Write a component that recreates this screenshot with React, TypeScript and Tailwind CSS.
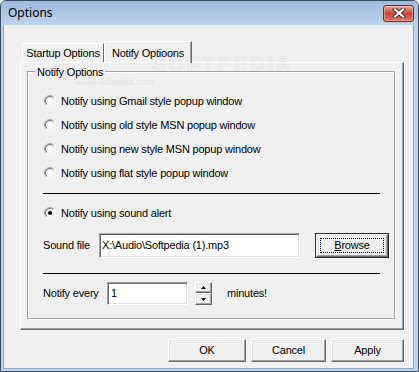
import type { ReactNode } from "react";

// Classic Win7-basic "Options" dialog

const raised =
  "border border-t-white border-l-white border-r-[#696969] border-b-[#696969] shadow-[inset_-1px_-1px_0_#a0a0a0,inset_1px_1px_0_#e3e3e3] bg-[#f0f0f0]";
const sunken =
  "border border-t-[#a0a0a0] border-l-[#a0a0a0] border-r-white border-b-white shadow-[inset_1px_1px_0_#696969,inset_-1px_-1px_0_#e3e3e3] bg-white";

function Radio({ checked }: { checked?: boolean }) {
  return (
    <svg width="12" height="12" viewBox="0 0 12 12" className="shrink-0">
      <circle cx="6" cy="6" r="5.5" fill="#fff" />
      <path d="M2.1 9.9 A5.5 5.5 0 0 1 9.9 2.1" stroke="#a0a0a0" strokeWidth="1" fill="none" />
      <path d="M2.8 9.2 A4.5 4.5 0 0 1 9.2 2.8" stroke="#696969" strokeWidth="1" fill="none" />
      <path d="M9.9 2.1 A5.5 5.5 0 0 1 2.1 9.9" stroke="#ffffff" strokeWidth="1" fill="none" />
      <path d="M9.2 2.8 A4.5 4.5 0 0 1 2.8 9.2" stroke="#e3e3e3" strokeWidth="1" fill="none" />
      {checked && <circle cx="6" cy="6" r="2" fill="#000" />}
    </svg>
  );
}

function RadioRow({ label, checked }: { label: string; checked?: boolean }) {
  return (
    <div className="h-[24px] flex items-center ml-[1px]">
      <Radio checked={checked} />
      <span className="ml-[5px]">{label}</span>
    </div>
  );
}

function Button({ children, className = "" }: { children: ReactNode; className?: string }) {
  return (
    <div className={`h-[23px] flex items-center justify-center ${raised} ${className}`}>
      {children}
    </div>
  );
}

function CloseButton() {
  return (
    <div className="w-[31px] h-[17px] rounded-[3px] border border-[#6b2a22] bg-gradient-to-b from-[#e9a899] via-[#c5483b] to-[#d9796a] flex items-center justify-center shadow-[inset_0_0_0_1px_rgba(255,255,255,0.35)]">
      <svg width="14" height="10" viewBox="0 0 14 10">
        <path d="M3 1.5 L11 8.5 M11 1.5 L3 8.5" stroke="#4a2420" strokeWidth="4" strokeLinecap="square" />
        <path d="M3 1.5 L11 8.5 M11 1.5 L3 8.5" stroke="#ffffff" strokeWidth="2.2" strokeLinecap="square" />
      </svg>
    </div>
  );
}

function Spinner() {
  return (
    <div className="w-[17px] h-[23px] flex flex-col">
      <div className={`h-[11px] flex items-center justify-center ${raised}`}>
        <svg width="5" height="3" viewBox="0 0 5 3">
          <path d="M2.5 0 L5 3 L0 3 Z" fill="#000" />
        </svg>
      </div>
      <div className={`h-[12px] flex items-center justify-center ${raised}`}>
        <svg width="5" height="3" viewBox="0 0 5 3">
          <path d="M0 0 L5 0 L2.5 3 Z" fill="#000" />
        </svg>
      </div>
    </div>
  );
}

export default function App() {
  return (
    <div className="w-[419px] h-[372px] flex flex-col bg-[#bfd5ec] border border-[#3b4b5e] rounded-t-[6px] overflow-hidden font-['Liberation_Sans',Arial,sans-serif] text-[11px] tracking-[-0.2px] text-black">
      {/* title bar */}
      <div className="h-[24px] shrink-0 flex items-center justify-between pl-[7px] pr-[4px] bg-gradient-to-b from-[#9fbbdb] to-[#bcd3ec]">
        <span className="font-['Noto_Sans',sans-serif] text-[12px] tracking-normal">Options</span>
        <CloseButton />
      </div>

      {/* client area */}
      <div className="relative flex-1 ml-[2px] mr-[4px] mb-[2px] border-x border-b border-[#8fa8c6] bg-[#f0f0f0] pt-[16px] pl-[16px] pr-[9px] flex flex-col">
        {/* softpedia watermark (behind everything) */}
        <span className="pointer-events-none absolute left-[148px] top-[24px] text-[20px] font-bold tracking-[3px] text-transparent [-webkit-text-stroke:1px_#e6e6e6]">
          SOFTPEDIA
        </span>
        <span className="pointer-events-none absolute left-[72px] top-[51px] text-[9px] tracking-normal text-[#e2e2e2]">
          www.softpedia.com
        </span>

        {/* tabs */}
        <div className="relative h-[21px] flex items-end pl-[2px]">
          <div className="w-[82px] h-[19px] border-t border-l border-white border-r border-r-[#696969] flex items-center justify-center pt-[1px]">
            Startup Options
          </div>
          <div className="relative z-10 w-[88px] h-[22px] -mb-[1px] border-t border-l border-white border-r border-r-[#696969] shadow-[inset_-1px_0_0_#a0a0a0] flex items-start justify-center pt-[3px]">
            Notify Optioons
          </div>
        </div>

        {/* tab panel */}
        <div className="relative h-[268px] border border-t-white border-l-white border-r-[#696969] border-b-[#696969] shadow-[inset_-1px_-1px_0_#a0a0a0] pt-[8px] pl-[6px] pr-[8px] pb-[10px] flex flex-col">
          {/* group box */}
          <div className="relative flex-1 border border-[#a0a0a0] shadow-[1px_1px_0_#fff,inset_1px_1px_0_#fff] pt-[17px] pl-[15px] pr-[14px] flex flex-col">
            <span className="absolute -top-[8px] left-[7px] bg-[#f0f0f0] px-[2px]">Notify Options</span>

            <RadioRow label="Notify using Gmail style popup window" />
            <RadioRow label="Notify using old style MSN popup window" />
            <RadioRow label="Notify using new style MSN popup window" />
            <RadioRow label="Notify using flat style popup window" />

            <div className="mt-[8px] h-px bg-black" />

            <div className="mt-[7px]">
              <RadioRow label="Notify using sound alert" checked />
            </div>

            <div className="mt-[8px] h-[25px] flex items-center">
              <span className="w-[56px] shrink-0">Sound file</span>
              <div className={`w-[201px] h-[25px] shrink-0 pl-[2px] pt-[3px] ${sunken}`}>
                X:\Audio\Softpedia (1).mp3
              </div>
              <div className="ml-[15px] w-[74px] h-[25px] shrink-0 border border-[#2a2a2a]">
                <div className={`h-full flex items-center justify-center ${raised}`}>
                  <div className="w-[64px] h-[15px] border border-dotted border-black flex items-center justify-center">
                    <span>
                      <span className="underline">B</span>rowse
                    </span>
                  </div>
                </div>
              </div>
            </div>

            <div className="mt-[15px] h-px bg-black" />

            <div className="mt-[8px] h-[23px] flex items-center">
              <span className="w-[64px] shrink-0">Notify every</span>
              <div className={`w-[81px] h-[23px] shrink-0 pl-[3px] pt-[2px] ${sunken}`}>1</div>
              <div className="ml-[7px] shrink-0">
                <Spinner />
              </div>
              <span className="ml-[15px]">minutes!</span>
            </div>
          </div>
        </div>

        {/* dialog buttons */}
        <div className="mt-[9px] flex justify-end gap-[5px]">
          <Button className="w-[78px]">OK</Button>
          <Button className="w-[75px]">Cancel</Button>
          <Button className="w-[73px]">Apply</Button>
        </div>
      </div>
    </div>
  );
}
